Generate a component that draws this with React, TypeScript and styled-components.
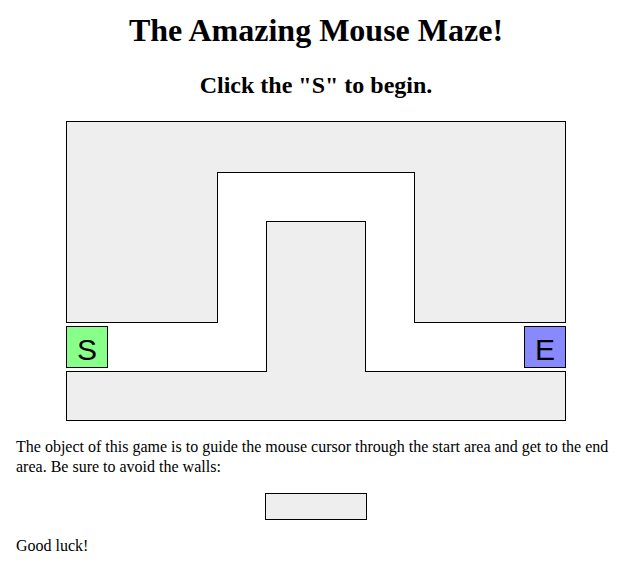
import styled, { createGlobalStyle } from "styled-components";

const GlobalStyle = createGlobalStyle`
  body {
    margin: 0;
    background: #ffffff;
    color: #000000;
    font-family: "Liberation Serif", "Times New Roman", serif;
  }
`;

const Page = styled.div`
  padding: 0 7px 0 16px;
`;

export const Title = styled.h1`
  font-size: 32px;
  font-weight: bold;
  line-height: 40px;
  text-align: center;
  margin: 10px 0 20px;
`;

export const SubTitle = styled.h2`
  font-size: 24px;
  font-weight: bold;
  line-height: 30px;
  text-align: center;
  margin: 0 0 21px;
`;

const Maze = styled.div`
  position: relative;
  width: 500px;
  height: 300px;
  margin: 0 auto;
`;

type Sides = { top?: boolean; right?: boolean; bottom?: boolean; left?: boolean };

const Wall = styled.div<{ $x: number; $y: number; $w: number; $h: number; $open?: Sides }>`
  position: absolute;
  box-sizing: border-box;
  left: ${(p) => p.$x}px;
  top: ${(p) => p.$y}px;
  width: ${(p) => p.$w}px;
  height: ${(p) => p.$h}px;
  background: #eeeeee;
  border: 1px solid #000000;
  ${(p) => (p.$open?.top ? "border-top: none;" : "")}
  ${(p) => (p.$open?.right ? "border-right: none;" : "")}
  ${(p) => (p.$open?.bottom ? "border-bottom: none;" : "")}
  ${(p) => (p.$open?.left ? "border-left: none;" : "")}
`;

const Marker = styled.div<{ $x: number; $color: string }>`
  position: absolute;
  box-sizing: border-box;
  left: ${(p) => p.$x}px;
  top: 205px;
  width: 42px;
  height: 42px;
  background: ${(p) => p.$color};
  border: 1px solid #000000;
  font-family: "Liberation Sans", Arial, sans-serif;
  font-size: 30px;
  line-height: 46px;
  text-align: center;
  overflow: hidden;
  cursor: pointer;
`;

const Text = styled.p`
  font-size: 16px;
  line-height: 20px;
  margin: 16px 0;
`;

const Example = styled.div`
  box-sizing: border-box;
  width: 102px;
  height: 27px;
  margin: 0 auto;
  background: #eeeeee;
  border: 1px solid #000000;
`;

export default function App() {
  return (
    <Page>
      <GlobalStyle />
      <Title>The Amazing Mouse Maze!</Title>
      <SubTitle>Click the "S" to begin.</SubTitle>

      <Maze>
        <Wall $x={0} $y={0} $w={152} $h={202} />
        <Wall $x={348} $y={0} $w={152} $h={202} />
        <Wall $x={151} $y={0} $w={198} $h={52} $open={{ left: true, right: true }} />
        <Wall $x={0} $y={250} $w={500} $h={50} />
        <Wall $x={200} $y={100} $w={100} $h={151} $open={{ bottom: true }} />
        <Marker $x={0} $color="#88ff88">S</Marker>
        <Marker $x={458} $color="#8888ff">E</Marker>
      </Maze>

      <Text>
        The object of this game is to guide the mouse cursor through the start
        area and get to the end area. Be sure to avoid the walls:
      </Text>
      <Example />
      <Text>Good luck!</Text>
    </Page>
  );
}
